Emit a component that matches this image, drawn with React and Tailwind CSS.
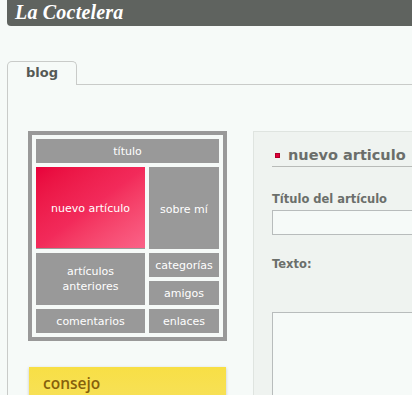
const Cell = ({ className = "", children }) => (
  <div className={`flex items-center justify-center bg-[#999999] text-center text-[11px] leading-[15px] text-white ${className}`}>
    {children}
  </div>
);

export default function App() {
  return (
    <div className="w-[412px] h-[395px] overflow-hidden bg-[#f6faf8] font-['DejaVu_Sans',sans-serif]">
      {/* header */}
      <div className="ml-[7px] h-[26px] rounded-bl-[4px] bg-[#5f635f] pl-[8px] flex items-center">
        <span className="font-['Liberation_Serif',serif] italic font-bold text-[20px] leading-none text-white -mt-[2px] tracking-[0.2px]">
          La Coctelera
        </span>
      </div>

      {/* tabs */}
      <div className="mt-[35px] ml-[7px] flex items-end">
        <div className="w-[70px] h-[24px] border border-b-0 border-[#c9cbc9] rounded-t-[5px] flex items-center justify-center">
          <span className="font-bold text-[13px] text-[#555955] -mt-[1px]">blog</span>
        </div>
        <div className="flex-1 border-b border-[#c9cbc9]"></div>
      </div>

      {/* content */}
      <div className="ml-[7px] border-l border-[#c9cbc9] flex h-[400px]">
        {/* sidebar */}
        <div className="w-[245px] shrink-0 pl-[20px] pt-[46px]">
          <div className="w-[199px] border-[4px] border-[#999999] bg-[#f6faf8] p-[4px]">
            <div className="grid grid-cols-[109px_70px] grid-rows-[24px_82px_24px_24px_24px] gap-[4px]">
              <Cell className="col-span-2">título</Cell>
              <div className="flex items-center justify-center pt-[3px] text-[11px] text-white bg-gradient-to-br from-[#e8003a] via-[#f22a5a] to-[#fa6288] border-b border-[#9a9a9a]">
                nuevo artículo
              </div>
              <Cell className="pt-[2px]">sobre mí</Cell>
              <Cell className="row-span-2 leading-[13px]">
                artículos
                <br />
                anteriores
              </Cell>
              <Cell>categorías</Cell>
              <Cell>amigos</Cell>
              <Cell>comentarios</Cell>
              <Cell>enlaces</Cell>
            </div>
          </div>

          <div className="mt-[26px] ml-[1px] w-[197px] h-[60px] bg-gradient-to-b from-[#f8df45] to-[#f6e264] shadow-[0_1px_3px_rgba(0,0,0,0.2)] pl-[14px] pt-[5px]">
            <span className="font-['Open_Sans',sans-serif] font-semibold text-[15.5px] text-[#86600c]">consejo</span>
          </div>
        </div>

        {/* main panel */}
        <div className="flex-1 mt-[46px] border-t border-l border-[#dfe4e0] bg-[#eff3f0] pl-[18px] pt-[14px]">
          <div className="flex items-center border-b border-[#b8bbb8] pb-[2px] pl-[3px] w-[200px]">
            <span className="w-[5px] h-[5px] bg-[#e0003a] border border-[#b0002a] mr-[8px] mt-[1px]"></span>
            <span className="font-bold text-[14.5px] leading-[18px] text-[#6b6e6b] whitespace-nowrap">nuevo articulo</span>
          </div>

          <div className="mt-[25px] font-bold text-[11.5px] leading-[14px] text-[#6b6f6b] whitespace-nowrap">
            Título del artículo
          </div>
          <div className="mt-[4px] w-[200px] h-[25px] border border-[#b8bcbc] bg-[#f6faf8]"></div>

          <div className="mt-[22px] font-bold text-[11.5px] leading-[14px] text-[#6b6f6b]">Texto:</div>
          <div className="mt-[41px] w-[200px] h-[120px] border border-[#b8bcbc] bg-[#f6faf8]"></div>
        </div>
      </div>
    </div>
  );
}
